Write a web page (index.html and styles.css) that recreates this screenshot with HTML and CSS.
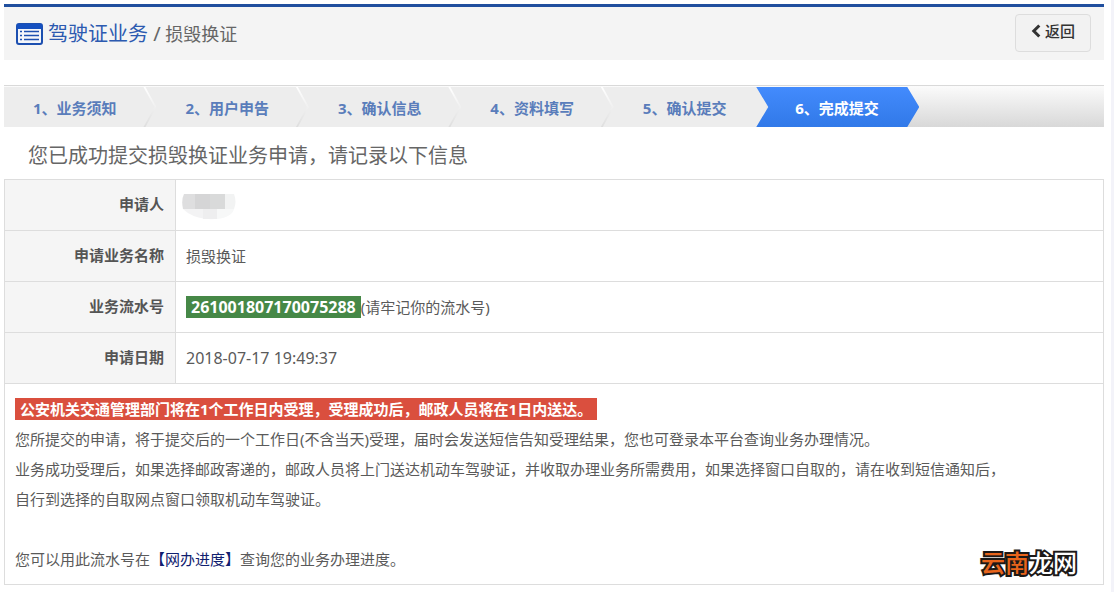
FILE: index.html
```html
<!DOCTYPE html>
<html lang="zh-CN">
<head>
<meta charset="utf-8">
<title>驾驶证业务 / 损毁换证</title>
<link rel="stylesheet" href="styles.css">
</head>
<body>
<main class="page">
  <header class="header">
    <svg class="header-icon" width="27" height="22" viewBox="0 0 27 22" aria-hidden="true">
      <rect x="1" y="1" width="25" height="20" rx="2" fill="#f4f6fa" stroke="#1c4fb0" stroke-width="2"/>
      <path d="M1 1h25v5H1z" fill="#1550c0"/>
      <path d="M4 8.500h2M4 12.500h2M4 16.500h2M8 8.500h15M8 12.500h15M8 16.500h15" stroke="#1c4fb0" stroke-width="1.500"/>
    </svg>
    <h1 class="title">驾驶证业务 <span class="title-sub"><span class="slash">/</span> 损毁换证</span></h1>
    <button class="back" type="button">
      <svg width="10" height="14" viewBox="0 0 10 14" aria-hidden="true"><path d="M8.300 1.500 2.800 7l5.500 5.500" fill="none" stroke="#333" stroke-width="3"/></svg>
      返回
    </button>
  </header>

  <ol class="steps">
    <li class="step">1、业务须知</li>
    <li class="step">2、用户申告</li>
    <li class="step">3、确认信息</li>
    <li class="step">4、资料填写</li>
    <li class="step step-last">5、确认提交</li>
    <li class="step step-active" aria-current="step">6、完成提交</li>
  </ol>

  <h2 class="message">您已成功提交损毁换证业务申请，请记录以下信息</h2>

  <table class="info">
    <tbody>
      <tr><th scope="row">申请人</th><td class="masked"><svg width="54" height="26" viewBox="0 0 54 26" role="img" aria-label="姓名已隐藏">
        <path d="M1 15h42v3H33v7q-16 1-27-6z" fill="#f3f3f4"/><path d="M21 15h14v10H21z" fill="#eeeeef"/><path d="M35 15h17q-2 8-17 10z" fill="#f7f8f8"/>
        <path d="M2 0h11v15H1Q-1 6 2 0z" fill="#dededf"/><path d="M13 0h15v15H13z" fill="#d5d5d6"/><path d="M28 0h15v15H28z" fill="#d9dada"/><path d="M43 0h9q3 8 0 15h-9z" fill="#f2f3f3"/>
      </svg></td></tr>
      <tr><th scope="row">申请业务名称</th><td>损毁换证</td></tr>
      <tr><th scope="row">业务流水号</th><td><strong class="serial">261001807170075288</strong>(请牢记你的流水号)</td></tr>
      <tr><th scope="row">申请日期</th><td class="date">2018-07-17 19:49:37</td></tr>
      <tr><td class="notes" colspan="2">
        <p><strong class="alert">公安机关交通管理部门将在1个工作日内受理，受理成功后，邮政人员将在1日内送达。</strong></p>
        <p>您所提交的申请，将于提交后的一个工作日(不含当天)受理，届时会发送短信告知受理结果，您也可登录本平台查询业务办理情况。</p>
        <p>业务成功受理后，如果选择邮政寄递的，邮政人员将上门送达机动车驾驶证，并收取办理业务所需费用，如果选择窗口自取的，请在收到短信通知后，<br>自行到选择的自取网点窗口领取机动车驾驶证。</p>
        <p class="progress">您可以用此流水号在<a href="#">【网办进度】</a>查询您的业务办理进度。</p>
      </td></tr>
    </tbody>
  </table>
  <div class="watermark"><span class="watermark-accent">云南</span>龙网</div>
</main>
</body>
</html>
```
FILE: styles.css
```css
* { box-sizing: border-box; }
body {
  margin: 0;
  min-height: 100vh;
  background: #fff;
  border-right: 3px solid #f3f3f9;
  color: #5a5a5a;
  font: 15px/30px "Noto Sans", "Noto Sans CJK SC", sans-serif;
}
.page { position: relative; padding: 4px 7px 7px 4px; }
.header {
  display: flex;
  align-items: center;
  height: 56px;
  padding: 0 13px 0 12px;
  border-top: 3px solid #204f9e;
  background: #f4f4f4;
}
.header-icon { flex: none; margin-right: 5px; }
.title {
  margin: 0;
  color: #2c5ab0;
  font-size: 20px;
  font-weight: 400;
}
.title-sub { color: #666; font-size: 18px; }
.slash { font-size: 20px; }
.back {
  display: flex;
  align-items: center;
  justify-content: center;
  gap: 4px;
  width: 76px;
  height: 38px;
  margin: 0 0 2px auto;
  padding: 0 0 4px;
  border: 1px solid #ddd;
  border-radius: 4px;
  background: #f2f2f2;
  color: #333;
  font: inherit;
  font-weight: 500;
  cursor: pointer;
}
.steps {
  display: flex;
  height: 42px;
  margin: 25px 0 0;
  padding: 1px 0 0;
  list-style: none;
  border-top: 1px solid #d9d9d9;
  background: linear-gradient(#fbfbfb, #d8d8d8);
}
.step {
  position: relative;
  flex: 0 0 13.86%;
  padding-left: 29px;
  background: #ededed;
  color: #5a7dbb;
  font-weight: 700;
  line-height: 42px;
  white-space: nowrap;
}
.step::after {
  content: "";
  position: absolute;
  z-index: 1;
  top: 0;
  right: 0;
  width: 13px;
  height: 40px;
  background: linear-gradient(#fff, #f0f0f0 50%, #dedede);
  clip-path: polygon(0 0, 2px 0, 100% 50%, 2px 100%, 0 100%, 11px 50%);
}
.step-last::after { display: none; }
.step-active {
  z-index: 2;
  flex-basis: 163px;
  margin-left: -10px;
  padding-left: 39px;
  background: linear-gradient(#438bfd, #3179e8);
  clip-path: polygon(0 0, calc(100% - 12px) 0, 100% 50%, calc(100% - 12px) 100%, 0 100%, 12px 50%);
  color: #fff;
}
.step-active::after { display: none; }
.message {
  margin: 0;
  padding: 9px 24px 3px;
  color: #666;
  font-size: 20px;
  font-weight: 400;
  line-height: 40px;
}
.info {
  width: 100%;
  border-collapse: collapse;
}
.info th, .info td { border: 1px solid #ddd; }
.info th {
  width: 171px;
  height: 51px;
  padding: 0 11px 2px 0;
  background: #f5f5f5;
  color: #555;
  font-weight: 700;
  text-align: right;
}
.info td { padding: 0 10px; }
.info .masked { padding: 4px 6px 0; }
.masked svg { display: block; }
.info .date { font-size: 16px; }
.serial, .alert {
  display: inline-block;
  padding: 0 5px;
  color: #fff;
  line-height: 22px;
}
.serial { background: #468847; font-size: 16px; }
.alert { background: #da4f3e; }
.info .notes { padding: 10px; }
.notes p { margin: 0; }
.notes .progress { padding-top: 30px; }
.notes a { color: #10206f; text-decoration: none; }
.watermark {
  position: absolute;
  right: 34px;
  bottom: 14px;
  color: #fff;
  font-size: 24px;
  font-weight: 500;
  -webkit-text-stroke: 4px #1c1917;
  paint-order: stroke fill;
}
.watermark-accent { color: #e8641b; }
```
